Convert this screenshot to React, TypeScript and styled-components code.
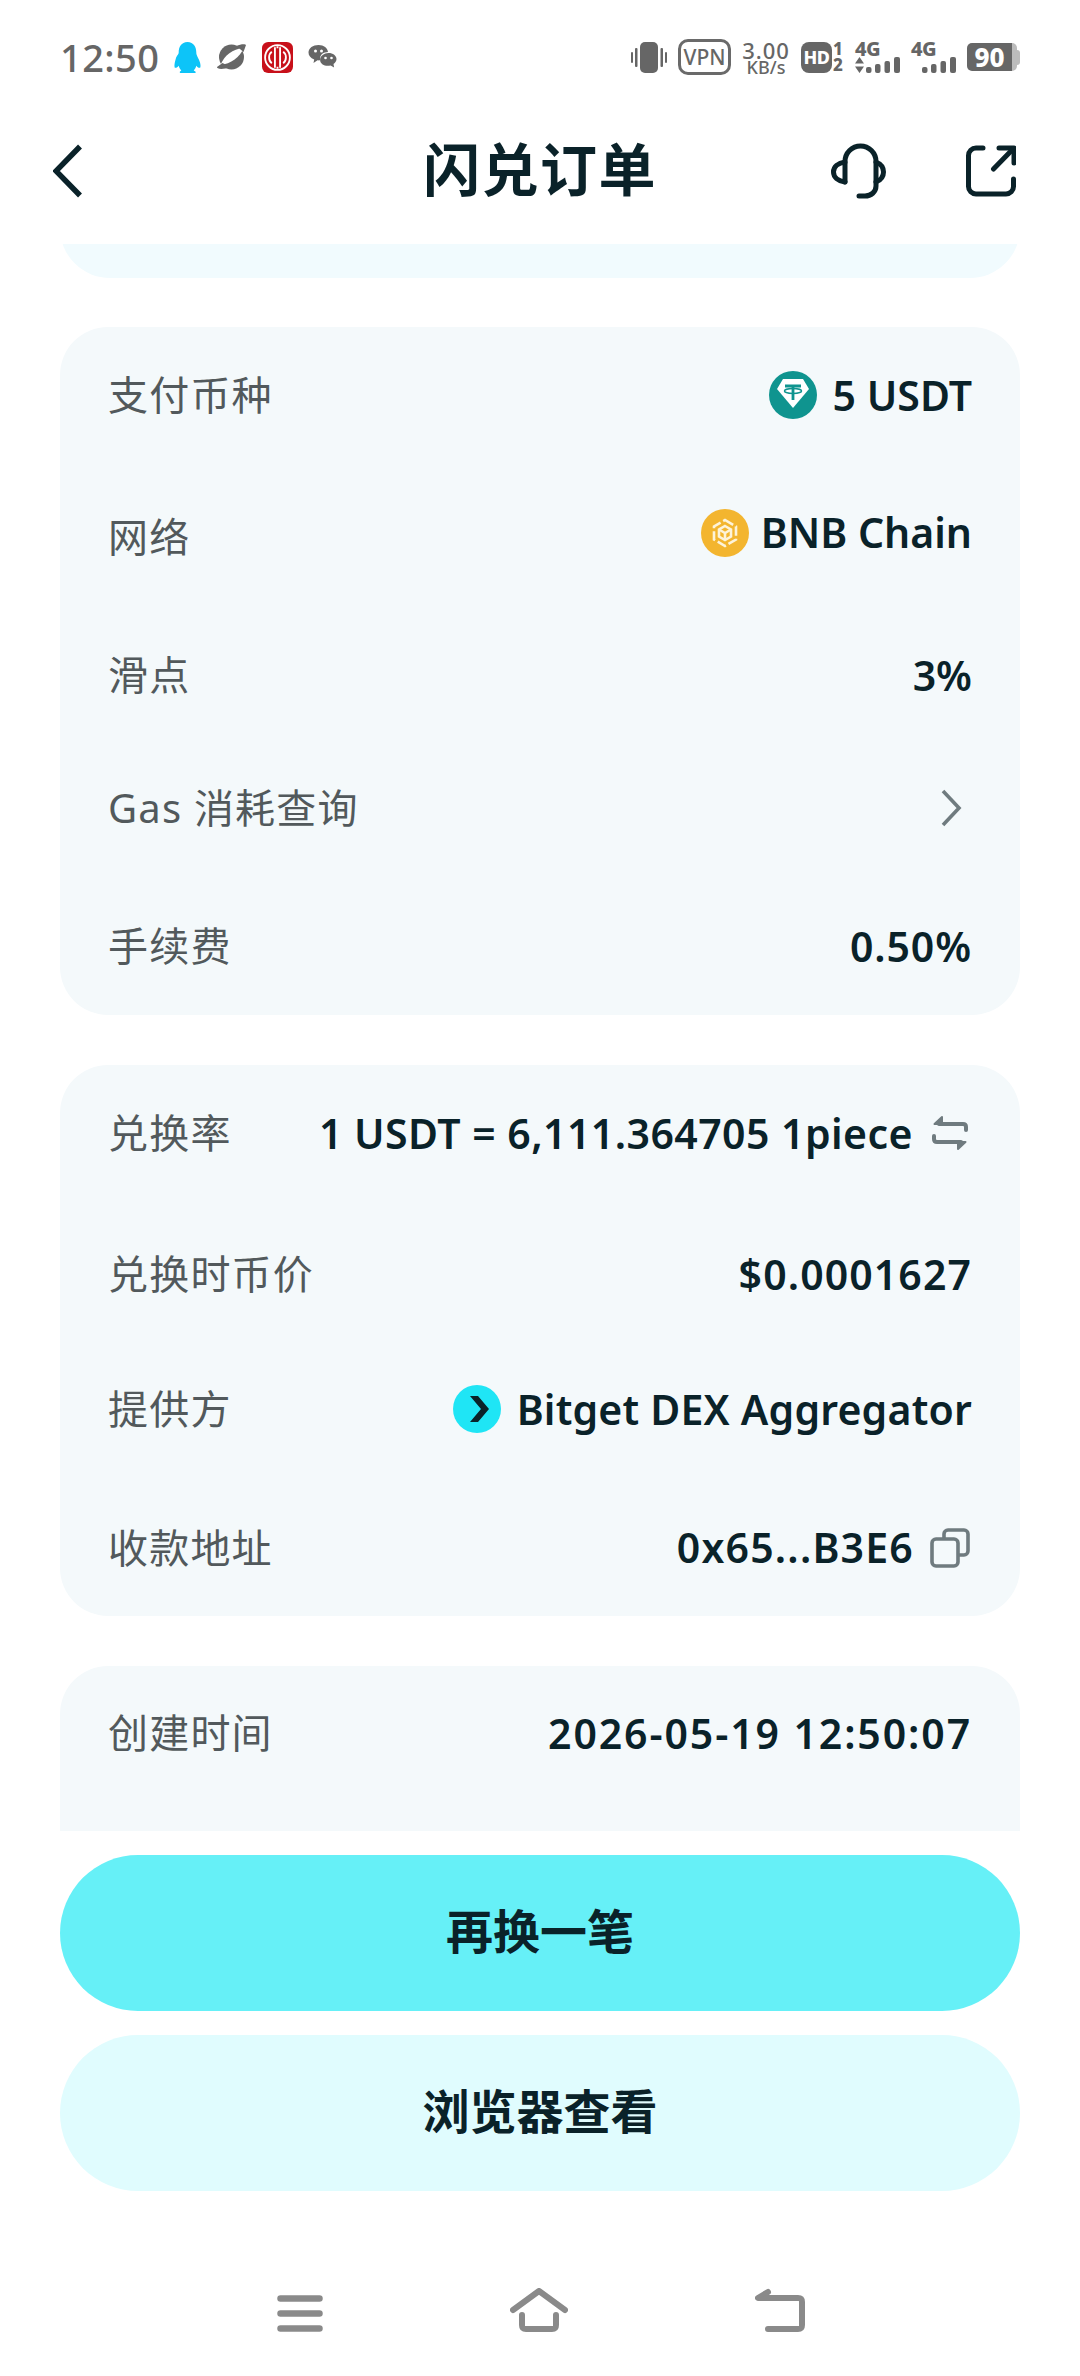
import React from "react";
import styled, { createGlobalStyle } from "styled-components";

const Global = createGlobalStyle`
  html, body { margin: 0; padding: 0; background: #fff; }
  * { box-sizing: border-box; }
  #root { width: 1080px; }
`;

const FONT = `"Noto Sans", "Noto Sans CJK SC", sans-serif`;

const Page = styled.div`
  position: relative;
  width: 1080px;
  height: 2376px;
  background: #fff;
  display: flex;
  flex-direction: column;
  font-family: ${FONT};
  color: #0a2229;
  overflow: hidden;
`;

const StatusBar = styled.div`
  height: 114px;
  flex: none;
  padding: 0 60px;
  display: flex;
  align-items: center;
  justify-content: space-between;
  color: #666;
`;
const StatusGroup = styled.div<{ $gap: number }>`
  display: flex;
  align-items: center;
  gap: ${(p) => p.$gap}px;
`;
const Clock = styled.span`
  font-size: 38px;
  font-weight: 500;
  line-height: 1;
  width: 95px;
  margin-right: 4px;
  letter-spacing: 0.4px;
`;
const VpnBadge = styled.span`
  width: 53px;
  height: 36px;
  border: 3px solid #6a6a6a;
  border-radius: 10px;
  font-size: 21px;
  font-weight: 500;
  line-height: 30px;
  text-align: center;
`;
const Speed = styled.span`
  display: flex;
  flex-direction: column;
  align-items: center;
  font-weight: 500;
  width: 48px;
  line-height: 1;
`;
const SpeedTop = styled.span`
  font-size: 22px;
  letter-spacing: 1px;
`;
const SpeedBottom = styled.span`
  font-size: 18px;
  margin-top: -3px;
`;
const HdBadge = styled.span`
  width: 31px;
  height: 31px;
  border-radius: 8px;
  background: #666;
  color: #fff;
  font-size: 18px;
  font-weight: 800;
  letter-spacing: -0.5px;
  line-height: 31px;
  text-align: center;
`;
const SimDigits = styled.span`
  display: flex;
  flex-direction: column;
  width: 11px;
  font-size: 17px;
  font-weight: 800;
  line-height: 16px;
  margin-left: -10px;
`;
const Signal = styled.span`
  position: relative;
  display: block;
  width: 45px;
  height: 31px;
`;
const SignalLabel = styled.span`
  position: absolute;
  left: 0;
  top: -3px;
  font-size: 20px;
  font-weight: 800;
  letter-spacing: -0.5px;
  line-height: 20px;
`;
const SignalBarsSlot = styled.span`
  position: absolute;
  right: 0;
  bottom: 0;
  display: flex;
`;
const SignalArrows = styled.span`
  position: absolute;
  left: 0;
  bottom: 0;
  display: flex;
`;
const Battery = styled.span`
  display: flex;
  align-items: center;
`;
const BatteryBody = styled.span`
  width: 45px;
  height: 28px;
  border-radius: 5px 0 0 5px;
  background: #666;
  color: #fff;
  font-size: 26px;
  font-weight: 800;
  line-height: 28px;
  text-align: center;
`;
const BatteryRest = styled.span`
  width: 5px;
  height: 28px;
  background: #bcbcbc;
  border-radius: 0 5px 5px 0;
`;
const BatteryTip = styled.span`
  width: 3px;
  height: 15px;
  background: #bcbcbc;
  border-radius: 0 3px 3px 0;
`;

const NavBar = styled.div`
  height: 114px;
  flex: none;
  position: relative;
  padding: 0 64px 0 53px;
  display: flex;
  align-items: center;
  justify-content: space-between;
`;
const Title = styled.h1`
  position: absolute;
  left: 0;
  right: 0;
  margin: 0;
  padding-bottom: 3px;
  text-align: center;
  font-size: 57px;
  font-weight: 700;
  letter-spacing: 1.4px;
  line-height: 1;
`;
const NavActions = styled.div`
  display: flex;
  align-items: center;
  gap: 80px;
`;

const Content = styled.div`
  flex: 1;
  padding: 16px 60px 0;
  display: flex;
  flex-direction: column;
`;
const StubClip = styled.div`
  height: 34px;
  overflow: hidden;
  display: flex;
  align-items: flex-end;
  margin-bottom: 49px;
`;
const StubCard = styled.div`
  flex: 1;
  height: 100px;
  background: #f1fbfe;
  border-radius: 54px;
`;
const Card = styled.section`
  background: #f4f9fb;
  border-radius: 48px;
  margin-bottom: 50px;
  padding: 0 48px;
`;
const ClippedCard = styled(Card)`
  border-radius: 48px 48px 0 0;
  height: 165px;
  margin-bottom: 24px;
`;
const Row = styled.div<{ $h: number; $pb?: number }>`
  height: ${(p) => p.$h}px;
  padding-bottom: ${(p) => p.$pb ?? 0}px;
  display: flex;
  align-items: center;
  justify-content: space-between;
`;
const Label = styled.span`
  font-size: 40px;
  letter-spacing: 1.2px;
  color: #52595c;
  line-height: 1;
`;
const Value = styled.span<{ $ls?: number; $mb?: number; $gap?: number }>`
  display: flex;
  align-items: center;
  gap: ${(p) => p.$gap ?? 16}px;
  font-size: 41px;
  font-weight: 600;
  letter-spacing: ${(p) => p.$ls ?? 0}px;
  margin-bottom: ${(p) => p.$mb ?? 0}px;
  color: #0a2229;
  line-height: 1;
  white-space: nowrap;
`;
const TrailingIcon = styled.span<{ $mr: number; $ml: number }>`
  display: flex;
  margin-right: ${(p) => p.$mr}px;
  margin-left: ${(p) => p.$ml}px;
`;

const Button = styled.div<{ $bg: string }>`
  height: 156px;
  flex: none;
  border-radius: 78px;
  background: ${(p) => p.$bg};
  display: flex;
  align-items: center;
  justify-content: center;
  font-size: 47px;
  font-weight: 700;
  padding-bottom: 10px;
  margin-bottom: 24px;
`;

const BottomNav = styled.div`
  position: absolute;
  top: 2288px;
  left: 277px;
  width: 528px;
  display: flex;
  justify-content: space-between;
  align-items: flex-end;
  height: 44px;
`;

const Dark = "#0a2229";
const Grey = "#6f7b7f";

const Chevron = () => (
  <svg width="30" height="54" viewBox="0 0 30 54" fill="none">
    <path d="M27 2.500 3 27l24 24.500" stroke={Dark} strokeWidth="5.500" />
  </svg>
);
const Headset = () => (
  <svg width="55" height="56" viewBox="0 0 55 56" fill="none" stroke={Dark} strokeWidth="5" strokeLinecap="round" strokeLinejoin="round">
    <path d="M14 39V18.500a15.500 15.500 0 0 1 31 0V43c0 6-5 10-11 10h-6" />
    <path d="M14 19C7 20 2.500 24 2.500 29S7 38 14 39" />
    <path d="M45 19c5 2 7.500 5 7.500 10S50 37 45 39" />
  </svg>
);
const ShareIcon = () => (
  <svg width="50" height="52" viewBox="0 0 50 52" fill="none" stroke={Dark} strokeWidth="5" strokeLinecap="round" strokeLinejoin="round">
    <path d="M17 3H10a7.500 7.500 0 0 0-7.500 7.500v31A7.500 7.500 0 0 0 10 49h30a7.500 7.500 0 0 0 7.500-7.500V34" />
    <path d="M33 3h15v15" />
    <path d="M47 4 27.500 24" />
  </svg>
);

const Penguin = () => (
  <svg width="27" height="31" viewBox="0 0 26 30">
    <path fill="#0dc4f8" d="M13 0c6 0 8.500 5 8.500 10 0 2 .5 3 1.500 5 2 3.500 3 7 2.500 9.500-.8 1.300-3 0-4-1.500-.5 2-1.500 3.500-2.500 4.500 2 .8 2.500 1.800 1.500 2.500H6c-1-.7-.5-1.700 1-2.500-1-1-2-2.500-2.500-4.500C3.500 24.500 1 25.800.5 24.500c-.5-2.500.5-6 1.500-9.500 1-2 2.500-3 2.500-5C4.500 5 7 0 13 0Z" />
  </svg>
);
const Planet = () => (
  <svg width="31" height="28" viewBox="0 0 30 28">
    <circle cx="15" cy="14" r="12.500" fill="#666" />
    <path d="M4 22C8 12 16 6 27 5 24 14 14 21 4 22Z" fill="#fff" />
    <path d="M.5 24C0 26 6 27 14 24L6 20ZM29.500 2C29 1 24 1 20 3L27 9Z" fill="#666" />
  </svg>
);
const Citic = () => (
  <svg width="31" height="31" viewBox="0 0 30 30">
    <rect width="30" height="30" rx="6" fill="#c8101a" />
    <circle cx="15" cy="15" r="12" fill="none" stroke="#fff" strokeWidth="1.800" />
    <path d="M12.500 5v20M17.500 5v20M15 4v2M15 24v2" stroke="#fff" strokeWidth="1.800" />
    <path d="M9.500 9.500C6 12 6 18 9.500 20.500M20.500 9.500C24 12 24 18 20.500 20.500" fill="none" stroke="#fff" strokeWidth="1.800" />
  </svg>
);
const WeChat = () => (
  <svg width="29" height="25" viewBox="0 0 28 25">
    <path fill="#666" d="M10 0c5.500 0 9 3 9.500 7-4.500 0-8 2.800-8 6.500 0 .6 0 1.200.2 1.800-1 .2-1.700.2-2.700 0L5 18l.7-3.500C2 13 0 10.500 0 7.500 0 3 4.500 0 10 0Z" />
    <path fill="#666" d="M20 8c4.500 0 8 2.700 8 6 0 2-1.200 3.800-3 5l.6 3.500-3.500-2c-3.500.8-6 .2-8-1-2-1.500-2.500-3-2.500-5 0-3.500 4-6.500 8.400-6.500Z" />
    <g fill="#fff">
      <circle cx="7" cy="6" r="1.500" /><circle cx="13" cy="6" r="1.500" />
      <circle cx="17" cy="13" r="1.300" /><circle cx="23" cy="13" r="1.300" />
    </g>
  </svg>
);
const Vibrate = () => (
  <svg width="36" height="31" viewBox="0 0 36 31" fill="#666">
    <rect x="9" width="18" height="31" rx="5" />
    <rect x="0" y="10" width="2" height="11" rx="1" />
    <rect x="4" y="6" width="2.500" height="19" rx="1" />
    <rect x="29.500" y="6" width="2.500" height="19" rx="1" />
    <rect x="34" y="10" width="2" height="11" rx="1" />
  </svg>
);
const Bars = () => (
  <svg width="34" height="16" viewBox="0 0 34 16" fill="#666">
    <rect x="0" y="10" width="5.500" height="6" rx="2" />
    <rect x="9" y="7" width="5.500" height="9" rx="2" />
    <rect x="18.500" y="4" width="5.500" height="12" rx="2" />
    <rect x="28" y="0" width="6" height="16" rx="2" />
  </svg>
);
const UpDown = () => (
  <svg width="9" height="16" viewBox="0 0 9 16" fill="#666">
    <path d="M4.500 0 9 6.500H0ZM0 9.500h9L4.500 16Z" />
  </svg>
);

const Tether = () => (
  <svg width="48" height="48" viewBox="0 0 48 48">
    <circle cx="24" cy="24" r="24" fill="#0f948f" />
    <path d="M14 8h20l6 10-16 19L8 18Z" fill="#fff" />
    <path d="M16 15h16M24 15v14" stroke="#0f948f" strokeWidth="2.800" fill="none" />
    <ellipse cx="24" cy="20" rx="8.500" ry="2.400" stroke="#0f948f" strokeWidth="1.500" fill="none" />
  </svg>
);
const Bnb = () => (
  <svg width="48" height="48" viewBox="0 0 48 48">
    <circle cx="24" cy="24" r="24" fill="#f3b52f" />
    <g fill="none" stroke="#fdf3da" strokeWidth="2.600">
      <path d="M24 11l11 6.500v13L24 37l-11-6.500v-13Z" strokeDasharray="9.500 3" />
      <path d="M24 17l6 3.500v7L24 31l-6-3.500v-7Z" />
      <path d="M18 20.500l6 3.500 6-3.500M24 24v7" />
    </g>
  </svg>
);
const Aggregator = () => (
  <svg width="48" height="48" viewBox="0 0 48 48">
    <circle cx="24" cy="24" r="24" fill="#1fe5f5" />
    <path d="M17 11h8l11 13-11 13h-8l11-13Z" fill="#0a2229" />
  </svg>
);
const RightChevron = () => (
  <svg width="22" height="38" viewBox="0 0 22 38" fill="none">
    <path d="M3 2l16 17L3 36" stroke={Grey} strokeWidth="3.600" />
  </svg>
);
const Swap = () => (
  <svg width="38" height="36" viewBox="0 0 38 36" fill="none" stroke={Grey} strokeWidth="4" strokeLinecap="round" strokeLinejoin="round">
    <path d="M8 9h24c2 0 3 1 3 3v3" />
    <path d="M30 27H6c-2 0-3-1-3-3v-3" />
    <path d="M11 2 3.500 9 11 9Z" fill={Grey} strokeWidth="2" />
    <path d="M27 34l7.500-7L27 27Z" fill={Grey} strokeWidth="2" />
  </svg>
);
const Copy = () => (
  <svg width="40" height="40" viewBox="0 0 40 40" fill="none" stroke={Grey} strokeWidth="3.600" strokeLinejoin="round">
    <path d="M14 11V6a4 4 0 0 1 4-4h16a4 4 0 0 1 4 4v17a4 4 0 0 1-4 4h-5" />
    <rect x="2" y="11" width="26" height="27" rx="4" />
  </svg>
);
const NavGrey = "#8a8a8a";
const MenuIcon = () => (
  <svg width="46" height="37" viewBox="0 0 46 37" fill="none" stroke={NavGrey} strokeWidth="6.500" strokeLinecap="round">
    <path d="M3.500 3.500h39M3.500 18.500h39M3.500 33.500h39" />
  </svg>
);
const HomeIcon = () => (
  <svg width="58" height="44" viewBox="0 0 58 44" fill="none" stroke={NavGrey} strokeWidth="6" strokeLinecap="round" strokeLinejoin="round">
    <path d="M3 22 29 3l26 19" />
    <path d="M12 27v10c0 3 1 4 4 4h26c3 0 4-1 4-4V27" />
  </svg>
);
const BackIcon = () => (
  <svg width="50" height="44" viewBox="0 0 50 44" fill="none" stroke={NavGrey} strokeWidth="6" strokeLinecap="round" strokeLinejoin="round">
    <path d="M13 4 3 10h40c3 0 4 1 4 4v23c0 3-1 4-4 4H13" />
  </svg>
);

export default function App() {
  return (
    <Page>
      <Global />
      <StatusBar>
        <StatusGroup $gap={15}>
          <Clock>12:50</Clock>
          <Penguin />
          <Planet />
          <Citic />
          <WeChat />
        </StatusGroup>
        <StatusGroup $gap={11}>
          <Vibrate />
          <VpnBadge>VPN</VpnBadge>
          <Speed>
            <SpeedTop>3.00</SpeedTop>
            <SpeedBottom>KB/s</SpeedBottom>
          </Speed>
          <HdBadge>HD</HdBadge>
          <SimDigits>
            <span>1</span>
            <span>2</span>
          </SimDigits>
          <Signal>
            <SignalLabel>4G</SignalLabel>
            <SignalArrows><UpDown /></SignalArrows>
            <SignalBarsSlot><Bars /></SignalBarsSlot>
          </Signal>
          <Signal>
            <SignalLabel>4G</SignalLabel>
            <SignalBarsSlot><Bars /></SignalBarsSlot>
          </Signal>
          <Battery>
            <BatteryBody>90</BatteryBody>
            <BatteryRest />
            <BatteryTip />
          </Battery>
        </StatusGroup>
      </StatusBar>
      <NavBar>
        <Chevron />
        <Title>闪兑订单</Title>
        <NavActions>
          <Headset />
          <ShareIcon />
        </NavActions>
      </NavBar>
      <Content>
        <StubClip><StubCard /></StubClip>
        <Card>
          <Row $h={136}>
            <Label>支付币种</Label>
            <Value><Tether />5 USDT</Value>
          </Row>
          <Row $h={148}>
            <Label>网络</Label>
            <Value $mb={9} $gap={12}><Bnb />BNB Chain</Value>
          </Row>
          <Row $h={128}>
            <Label>滑点</Label>
            <Value>3%</Value>
          </Row>
          <Row $h={138}>
            <Label>Gas 消耗查询</Label>
            <TrailingIcon $mr={10} $ml={0}><RightChevron /></TrailingIcon>
          </Row>
          <Row $h={138}>
            <Label>手续费</Label>
            <Value $ls={0.9}>0.50%</Value>
          </Row>
        </Card>
        <Card>
          <Row $h={136}>
            <Label>兑换率</Label>
            <Value $ls={0.45}>1 USDT = 6,111.364705 1piece<TrailingIcon $mr={3} $ml={2}><Swap /></TrailingIcon></Value>
          </Row>
          <Row $h={146}>
            <Label>兑换时币价</Label>
            <Value $ls={1.1}>$0.0001627</Value>
          </Row>
          <Row $h={132} $pb={8}>
            <Label>提供方</Label>
            <Value $ls={0.2}><Aggregator />Bitget DEX Aggregator</Value>
          </Row>
          <Row $h={137}>
            <Label>收款地址</Label>
            <Value $ls={1.2}>0x65...B3E6<TrailingIcon $mr={2} $ml={0}><Copy /></TrailingIcon></Value>
          </Row>
        </Card>
        <ClippedCard>
          <Row $h={134}>
            <Label>创建时间</Label>
            <Value $ls={1.9}>2026-05-19 12:50:07</Value>
          </Row>
        </ClippedCard>
        <Button $bg="#66f0f7">再换一笔</Button>
        <Button $bg="#e0fcfe">浏览器查看</Button>
      </Content>
      <BottomNav>
        <MenuIcon />
        <HomeIcon />
        <BackIcon />
      </BottomNav>
    </Page>
  );
}
